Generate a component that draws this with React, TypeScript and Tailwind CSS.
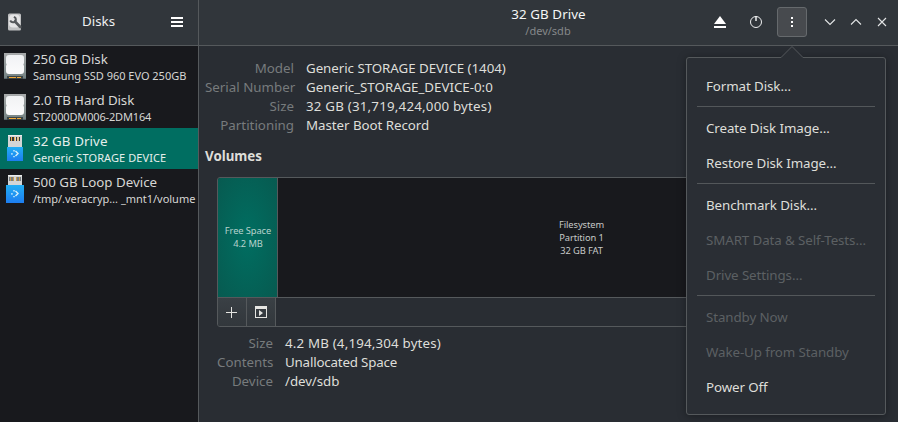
import React from "react";

function DriveIcon() {
  return (
    <svg width="22" height="26" viewBox="0 0 22 26" className="block">
      <defs>
        <linearGradient id="case" x1="0" y1="0" x2="0" y2="1">
          <stop offset="0" stopColor="#a9abac" />
          <stop offset="1" stopColor="#748283" />
        </linearGradient>
        <linearGradient id="plate" x1="0" y1="0" x2="0" y2="1">
          <stop offset="0" stopColor="#f1f2f4" />
          <stop offset="1" stopColor="#fbfbfc" />
        </linearGradient>
      </defs>
      <rect width="22" height="25" fill="url(#case)" />
      <path d="M5 2h12Q20 2 20 5v5q-1.200 1.500 0 3v5q0 3-3 3H5q-3 0-3-3v-5q1.200-1.500 0-3V5q0-3 3-3Z" fill="url(#plate)" />
      <rect x="3" y="23" width="16" height="3" fill="#3c4547" />
      <path d="M5 24.500h7M13 24.500h4" stroke="#f5ab3a" />
      <path d="M0 25.500h3M19 25.500h3" stroke="#59656a" />
    </svg>
  );
}

function UsbIcon({ loop = false }: { loop?: boolean }) {
  return (
    <svg width="18" height="28" viewBox="0 0 18 28" className="block">
      <defs>
        <linearGradient id="usb" x1="0" y1="0" x2="0" y2="1">
          <stop offset="0" stopColor="#22aef4" />
          <stop offset="1" stopColor="#1d7df0" />
        </linearGradient>
      </defs>
      <rect x="2" y="0" width="14" height="12" fill="#d3d5d6" />
      <path d="M2 .5h14" stroke="#eceeee" />
      {loop ? (
        <>
          <path d="M3 2h5v4H3zM10 2h5v4h-5z" fill="#777c80" />
          <path d="M4.500 2v4M7.500 2v4M10.500 2v4M13.500 2v4" stroke="#c89b4d" />
        </>
      ) : (
        <>
          <path d="M4 2h1v4H4zM6 2h2v4H6zM10 2h1v4h-1zM13 2h1v4h-1z" fill="#34373a" />
          <path d="M5.500 2v4M8.500 2v4M12 2v4" stroke="#efb04a" />
        </>
      )}
      {loop ? <rect x="0" y="10" width="18" height="18" fill="url(#usb)" /> : <rect x="1" y="12" width="16" height="14" fill="url(#usb)" />}
      <path d="M9.500 16 12 18.500 9.500 21" fill="none" stroke="#d6effd" strokeWidth="1.400" />
      <path d="M7 15h2v1.500H7zM5 18h1.800v1.800H5zM7 21h2v1.300H7z" fill="#9dd5fa" />
    </svg>
  );
}

const drives = [
  { name: "250 GB Disk", sub: "Samsung SSD 960 EVO 250GB", icon: <DriveIcon />, pad: "pl-1 pt-[7px]", ns: "tracking-normal", ss: "tracking-[-0.02px]" },
  { name: "2.0 TB Hard Disk", sub: "ST2000DM006-2DM164", icon: <DriveIcon />, pad: "pl-1 pt-[7px]", ns: "tracking-[-0.1px]", ss: "tracking-[-0.15px]" },
  { name: "32 GB Drive", sub: "Generic STORAGE DEVICE", icon: <UsbIcon />, pad: "pl-1.5 pt-[7px]", ns: "tracking-[0.1px]", ss: "tracking-[0.08px]", active: true },
  { name: "500 GB Loop Device", sub: "/tmp/.veracryp… _mnt1/volume", icon: <UsbIcon loop />, pad: "pl-1.5 pt-[6px]", ns: "tracking-normal", ss: "tracking-[-0.02px]" },
];

function Sidebar() {
  return (
    <aside className="flex w-[199px] shrink-0 flex-col border-r border-[#55595c] bg-[#18191d]">
      <header className="flex h-[46px] shrink-0 items-center border-b border-[#55595c] bg-[#31363b] pb-px pl-[7px]">
        <svg width="16" height="20" viewBox="0 0 16 20">
          <rect x="1" y="1.500" width="13" height="17" rx="1.500" fill="#bfc0c1" />
          <rect x="2" y="2.500" width="11" height="13" rx="4" fill="#e4e4e5" />
          <path d="M3.200 8.500Q4.500 11 7.500 10Q9.500 8.500 8.500 6L7 4.800" fill="none" stroke="#55585b" strokeWidth="2" />
          <path d="M8 9.500 13.300 15" fill="none" stroke="#55585b" strokeWidth="2.600" strokeLinecap="round" />
        </svg>
        <h1 className="ml-[59px] w-8 whitespace-nowrap text-[#eff0f1]">Disks</h1>
        <svg width="12" height="12" className="ml-[57px]" stroke="#fff" strokeWidth="2">
          <path d="M0 2h12M0 6h12M0 10h12" />
        </svg>
      </header>
      {drives.map((d) => (
        <div key={d.name} className={`flex h-[41px] shrink-0 ${d.active ? "bg-[#006e61] text-[#e5eeec]" : "text-[#d6d6d4]"}`}>
          <div className={`w-[33px] shrink-0 ${d.pad}`}>{d.icon}</div>
          <div className="pt-1 whitespace-nowrap">
            <div className={`leading-[19px] ${d.ns}`}>{d.name}</div>
            <div className={`text-[11px] leading-[14px] ${d.ss}`}>{d.sub}</div>
          </div>
        </div>
      ))}
    </aside>
  );
}

function Info({ rows, width }: { rows: string[][]; width: string }) {
  return (
    <dl>
      {rows.map(([k, v, spacing]) => (
        <div key={k} className="flex h-[19px] gap-3 leading-[19px] whitespace-nowrap">
          <dt className={`text-right text-[#777b7d] ${width}`}>{k}</dt>
          <dd className={`text-[#deded9] ${spacing}`}>{v}</dd>
        </div>
      ))}
    </dl>
  );
}

function Item({ children, off = false }: { children: React.ReactNode; off?: boolean }) {
  return <div className={`flex h-[35px] items-center pl-[9px] tracking-[-0.09px] whitespace-nowrap ${off ? "text-[#5c6063]" : "text-[#deded9]"}`}>{children}</div>;
}

function Rule() {
  return <div className="mt-0.5 mb-1 h-px bg-[#53575a]" />;
}

function Menu() {
  return (
    <div className="absolute top-[57px] left-[686px] h-[358px] w-[200px] rounded-[3px] border border-[#55595c] bg-[#2a2e34] px-2.5 pt-[11px] shadow-[0_1px_8px_rgba(0,0,0,0.35)]">
      <svg className="absolute -top-3 left-[93px]" width="24" height="13" viewBox="0 0 24 13">
        <path d="M0 12.500 1 11.500 12 .5 23 11.500 24 12.500V13H0Z" fill="#2a2e34" />
        <path d="M0 11.500H1L12 .5 23 11.500H24" fill="none" stroke="#55595c" />
      </svg>
      <Item>Format Disk…</Item>
      <Rule />
      <Item>Create Disk Image…</Item>
      <Item>Restore Disk Image…</Item>
      <Rule />
      <Item>Benchmark Disk…</Item>
      <Item off>SMART Data &amp; Self-Tests…</Item>
      <Item off>Drive Settings…</Item>
      <Rule />
      <Item off>Standby Now</Item>
      <Item off>Wake-Up from Standby</Item>
      <Item>Power Off</Item>
    </div>
  );
}

function Controls() {
  return (
    <div className="flex h-full items-center pb-0.5">
      <svg width="12" height="12" fill="#fff">
        <path d="M6 0 12 8H0ZM0 10h12v2H0Z" />
      </svg>
      <svg width="14" height="14" className="ml-[23px]" fill="none" stroke="#eff0f1">
        <circle cx="7" cy="7" r="5.500" />
        <path d="M7 1v5" strokeWidth="1.500" />
      </svg>
      <div className="ml-3.5 flex h-[30px] w-[30px] items-center justify-center rounded-[3px] border border-[#666a6d] bg-[#474a4e]">
        <svg width="2" height="10" fill="#fff">
          <path d="M0 0h2v2H0ZM0 4h2v2H0ZM0 8h2v2H0Z" />
        </svg>
      </div>
      <svg width="12" height="8" className="ml-[17px]" fill="none" stroke="#e3e5e6" strokeWidth="1.100">
        <path d="M1 1.500 6 6.500 11 1.500" />
      </svg>
      <svg width="12" height="8" className="ml-3.5" fill="none" stroke="#e3e5e6" strokeWidth="1.100">
        <path d="M1 6.500 6 1.500 11 6.500" />
      </svg>
      <svg width="10" height="10" className="ml-[15px]" fill="none" stroke="#e3e5e6" strokeWidth="1.100">
        <path d="M1 1 9 9M9 1 1 9" />
      </svg>
    </div>
  );
}

export default function App() {
  return (
    <div className="relative flex h-[422px] w-[898px] overflow-hidden bg-[#292d33] font-['Noto_Sans',sans-serif] text-[13.33px]">
      <Sidebar />
      <main className="flex min-w-0 flex-1 flex-col">
        <header className="flex h-[46px] shrink-0 justify-between border-b border-[#55595c] bg-[#31363b] pr-[11px]">
          <div className="ml-[299px] w-[100px] pt-[5px] text-center whitespace-nowrap">
            <div className="pl-px leading-[19px] tracking-[0.08px] text-[#f5f6f6]">32 GB Drive</div>
            <div className="text-[11px] leading-[14px] text-[#85888a]">/dev/sdb</div>
          </div>
          <Controls />
        </header>
        <div className="pt-[13px] pl-1.5">
          <Info
            width="w-[89px]"
            rows={[
              ["Model", "Generic STORAGE DEVICE (1404)", "tracking-[-0.05px]"],
              ["Serial Number", "Generic_STORAGE_DEVICE-0:0", "tracking-[-0.02px]"],
              ["Size", "32 GB (31,719,424,000 bytes)", "tracking-[0.2px]"],
              ["Partitioning", "Master Boot Record", "tracking-[-0.05px]"],
            ]}
          />
          <h2 className="mt-3 h-[19px] leading-[19px] font-bold text-[#deded9]">Volumes</h2>
        </div>
        <section className="mt-[11px] ml-[18px] h-[150px] w-[669px] overflow-hidden rounded-[3px] border border-[#55595c]">
          <div className="flex h-[120px] border-b border-[#55595c] text-center text-[9.3px] leading-[13px] tracking-[-0.08px] text-[#c7c9c8]">
            <div className="flex w-[60px] shrink-0 flex-col justify-center border-r border-[#55595c] bg-[radial-gradient(ellipse_at_center,#006e61,#075a50)] pb-0.5 pl-px whitespace-nowrap text-[#b7d2cc]">
              <div>Free Space</div>
              <div>4.2 MB</div>
            </div>
            <div className="flex flex-1 flex-col justify-center bg-[#18191d]">
              <div>Filesystem</div>
              <div>Partition 1</div>
              <div>32 GB FAT</div>
            </div>
          </div>
          <div className="flex h-7">
            <div className="flex w-[29px] items-center justify-center border-r border-[#55595c] bg-linear-to-b from-[#3a4045] to-[#32373c]">
              <svg width="12" height="12" stroke="#e5e5e2">
                <path d="M0 6.500h11M5.500 1v11" />
              </svg>
            </div>
            <div className="flex w-[29px] items-center justify-center border-r border-[#55595c] bg-linear-to-b from-[#3a4045] to-[#32373c]">
              <svg width="12" height="12" fill="#e5e5e2">
                <path fillRule="evenodd" d="M0 0h12v12H0ZM1 3v8h10V3ZM4 4 8 7 4 10Z" />
              </svg>
            </div>
          </div>
        </section>
        <div className="mt-[7px] pl-[18px]">
          <Info
            width="w-14"
            rows={[
              ["Size", "4.2 MB (4,194,304 bytes)", "tracking-[0.17px]"],
              ["Contents", "Unallocated Space", "tracking-[-0.18px]"],
              ["Device", "/dev/sdb", "tracking-[-0.08px]"],
            ]}
          />
        </div>
      </main>
      <Menu />
    </div>
  );
}
